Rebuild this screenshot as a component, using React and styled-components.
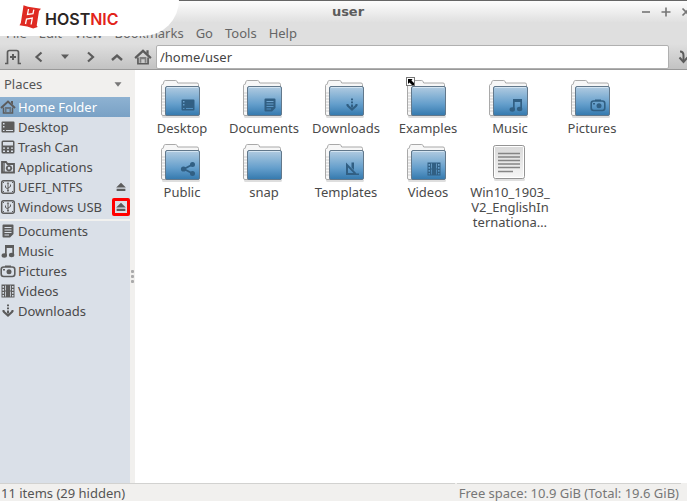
import React from "react";
import styled, { createGlobalStyle } from "styled-components";

const menus = ["File", "Edit", "View", "Bookmarks", "Go", "Tools", "Help"];

const places = [
  { name: "Home Folder", icon: "home", active: true },
  { name: "Desktop", icon: "desktop" },
  { name: "Trash Can", icon: "trash" },
  { name: "Applications", icon: "apps" },
  { name: "UEFI_NTFS", icon: "usb", eject: true },
  { name: "Windows USB", icon: "usb", eject: true, marked: true },
];

const bookmarks = [
  { name: "Documents", icon: "document" },
  { name: "Music", icon: "music" },
  { name: "Pictures", icon: "camera" },
  { name: "Videos", icon: "film" },
  { name: "Downloads", icon: "download" },
];

const files = [
  { lines: ["Desktop"], emblem: "desktop" },
  { lines: ["Documents"], emblem: "document" },
  { lines: ["Downloads"], emblem: "download" },
  { lines: ["Examples"], link: true },
  { lines: ["Music"], emblem: "music" },
  { lines: ["Pictures"], emblem: "camera" },
  { lines: ["Public"], emblem: "share" },
  { lines: ["snap"] },
  { lines: ["Templates"], emblem: "ruler" },
  { lines: ["Videos"], emblem: "film" },
  { lines: ["Win10_1903_", "V2_EnglishIn", "ternationa…"], text: true },
];

// all glyphs are drawn on a 16x16 grid
const glyphs = {
  home: (
    <>
      <path d="M1 9 8 2.5 15 9" fill="none" stroke="currentColor" strokeWidth="2" />
      <path d="M11 2h2v4l-2-2z" />
      <path d="M3.5 8.5V14h9V8.5" fill="none" stroke="currentColor" strokeWidth="1.5" />
      <path d="M5 8h6v5H9.5v-3h-3v3H5z" opacity="0.7" />
    </>
  ),
  desktop: (
    <path
      fillRule="evenodd"
      d="M2.5 2.5h11q1 0 1 1v9q0 1-1 1h-11q-1 0-1-1v-9q0-1 1-1zM3 4v1.5h1.5V4zM3 7v1.5h1.5V7zM3 11v1h1.5v-1zM6 11v1h7v-1z"
    />
  ),
  trash: (
    <path
      fillRule="evenodd"
      d="M3 1.5h10q1.5 0 1.5 1.5v10q0 1.5-1.5 1.5H3Q1.5 14.5 1.5 13V3Q1.5 1.5 3 1.5zM3 3v3.5h10V3zM3 8.5v1.2h2V8.5zM7 8.5v1.2h2V8.5zM11 8.5v1.2h2V8.5zM3 11.5v1.5h2v-1.5zM7 11.5v1.5h2v-1.5zM11 11.5v1.5h2v-1.5z"
    />
  ),
  apps: (
    <>
      <path d="M2 13.500V3h4l1.500 2H14v8.500z" fill="none" stroke="currentColor" strokeWidth="1.8" />
      <path d="M2 3h3v10H2z" opacity="0.7" />
      <circle cx="9" cy="9.200" r="2.200" fill="none" stroke="currentColor" strokeWidth="1.7" />
      <path d="M8.500 6h1v1.500h-1zM8.500 11h1v1.500h-1zM5.800 8.700h1.500v1H5.800zM10.800 8.700h1.500v1h-1.500z" />
    </>
  ),
  usb: (
    <>
      <rect x="1.7" y="1.7" width="12.600" height="12.600" rx="2" fill="none" stroke="currentColor" strokeWidth="1.5" />
      <path d="M8 4.500V12M5.500 6.500v2L8 10M10.500 5.500v2L8 9" fill="none" stroke="currentColor" />
      <path d="M3 3h1v1H3zM12 3h1v1h-1zM3 12h1v1H3zM12 12h1v1h-1zM7.200 11h1.600v1.600H7.200zM6.700 4.800 8 3l1.300 1.800z" />
    </>
  ),
  document: (
    <path
      fillRule="evenodd"
      d="M3.5 1.5h9q1 0 1 1V11L10 14.5H3.5q-1 0-1-1v-11q0-1 1-1zM4.5 4v1h7V4zM4.5 6.5v1h7v-1zM4.5 9v1h7V9zM4.5 11.5v1H9v-1z"
    />
  ),
  music: (
    <>
      <path d="M5 2h9v10h-1.700V5H6.700v7.500H5z" />
      <ellipse cx="4.300" cy="12.500" rx="2.700" ry="2.200" />
      <ellipse cx="11.600" cy="12" rx="2.700" ry="2.200" />
    </>
  ),
  camera: (
    <>
      <rect x="1.200" y="4" width="13.600" height="9.500" rx="2.500" fill="none" stroke="currentColor" strokeWidth="1.6" />
      <path d="M5 2.500h6V4H5zM3 6h2v1.500H3z" />
      <circle cx="9" cy="8.700" r="2.500" />
    </>
  ),
  film: (
    <path
      fillRule="evenodd"
      d="M1.5 1.5h13v13h-13zM2.5 3v1.7H4V3zM2.5 6v1.7H4V6zM2.5 9v1.7H4V9zM2.5 12v1.5H4V12zM12 3v1.7h1.5V3zM12 6v1.7h1.5V6zM12 9v1.7h1.5V9zM12 12v1.5h1.5V12zM5.2 2.5v5H6v-5zM5.2 8.5v5H6v-5zM10 2.5v5h.8v-5zM10 8.5v5h.8v-5z"
    />
  ),
  download: (
    <>
      <path d="M7 1.500h2v1.700H7zM7 4.500h2v1.800H7zM7 7.500h2v3H7zM2.500 7h2v2h-2zM11.500 7h2v2h-2z" />
      <path d="M3.500 8.500 8 12.500l4.500-4" fill="none" stroke="currentColor" strokeWidth="2.2" />
    </>
  ),
  share: (
    <>
      <path d="M12.500 3.500 4 8l8.500 4.500" fill="none" stroke="currentColor" strokeWidth="1.8" />
      <circle cx="12.500" cy="3.500" r="2.500" />
      <circle cx="3.500" cy="8" r="2.600" />
      <circle cx="12.500" cy="12.500" r="2.500" />
    </>
  ),
  ruler: (
    <>
      <path d="M2 1.500 14 14H2zM4 6.500V12h5.500z" fillRule="evenodd" />
      <path d="M7.500 1.500H10V9L7.500 6.500zM13 12.500h2V14h-2z" />
    </>
  ),
  newTab: (
    <>
      <path d="M0 14.500h2.500v-11q0-2 2-2h7q2 0 2 2v11H16" fill="none" stroke="currentColor" strokeWidth="1.7" />
      <path d="M7 5h2v2h2v2H9v2H7V9H5V7h2z" />
    </>
  ),
  back: <path d="m10.500 3.500-5 4.500 5 4.500" fill="none" stroke="currentColor" strokeWidth="2.2" />,
  forward: <path d="m5 3.500 5 4.500-5 4.500" fill="none" stroke="currentColor" strokeWidth="2.2" />,
  up: <path d="m3 11 5-4.500L13 11" fill="none" stroke="currentColor" strokeWidth="2.4" />,
  history: <path d="M4 5.500h8L8 10z" />,
  caret: <path d="M4 6h8l-4 5z" />,
  go: (
    <>
      <path d="M4 2.500q3.500 0 3.500 4v5.500" fill="none" stroke="currentColor" strokeWidth="2" />
      <path d="M3.500 8.500 7.500 13l4-4.500" fill="none" stroke="currentColor" strokeWidth="2" />
    </>
  ),
  eject: <path d="M8 3l5.500 5.500h-11zM3 10h10v2.500H3z" />,
  minimize: <path d="M4 7.200h8v1.600H4z" />,
  maximize: <path d="M7.200 3.500h1.600v3.700h3.700v1.600H8.800v3.700H7.200V8.800H3.500V7.200h3.700z" />,
  close: <path d="m4.500 4.500 7 7m0-7-7 7" stroke="currentColor" strokeWidth="1.7" />,
};

const Glyph = ({ name, size = 16 }) => (
  <svg width={size} height={size} viewBox="0 0 16 16" fill="currentColor" aria-hidden="true">
    {glyphs[name]}
  </svg>
);

const FolderIcon = ({ emblem, link }) => (
  <svg width="44" height="42" viewBox="0 0 44 42" overflow="visible" aria-hidden="true">
    <rect x="2" y="36" width="38" height="3" rx="1.5" fill="#000" opacity="0.13" />
    <path
      d="M1.5 35V6.5q0-1 1-1H3l1-3q.3-1 1.3-1h10.4q1 0 1.3 1l.7 1.500H37q1.500 0 1.500 1.500V35q0 1.500-1.500 1.500H3q-1.500 0-1.500-1.500z"
      fill="#f7f7f7"
      stroke="#a9a9a9"
    />
    <path d="M2 14h3.500M2 17h3.500M2 20h3.500M2 23h3.500M2 26h3.500M2 29h3.500M2 32h3.500" stroke="#cfcfcf" />
    <rect x="5.5" y="7.5" width="34" height="29" rx="1.5" fill="url(#folder)" stroke="#62788b" />
    <path d="M7 8.500h31" stroke="#d3e4f1" />
    {emblem && (
      <g transform="translate(20 18)" color="#315f83" fill="currentColor">
        {glyphs[emblem]}
      </g>
    )}
    {link && (
      <g>
        <rect x="0.5" y="-1.5" width="8" height="8" fill="#fff" stroke="#777" />
        <path d="M2 0h4.500L5.500 1.500 8 4v2H6L3.500 3.500 2 5z" fill="#000" />
      </g>
    )}
  </svg>
);

const TextIcon = () => (
  <svg width="44" height="42" viewBox="0 0 44 42" aria-hidden="true">
    <rect x="6" y="35" width="31" height="3" rx="1.5" fill="#000" opacity="0.12" />
    <rect x="5.5" y="2.5" width="31" height="33" rx="2" fill="url(#paper)" stroke="#949494" />
    <rect x="6.5" y="3.5" width="29" height="31" rx="1" fill="none" stroke="#fff" />
    <path
      d="M10 10.500h22M10 14h22M10 17.500h22M10 21h22M10 24.500h22M10 28.500h15"
      stroke="#858585"
      strokeWidth="1.5"
    />
  </svg>
);

const Gradients = () => (
  <HiddenSvg aria-hidden="true">
    <defs>
      <linearGradient id="folder" x1="0" y1="0" x2="0" y2="1">
        <stop offset="0" stopColor="#b2cce1" />
        <stop offset="0.6" stopColor="#659fcc" />
        <stop offset="1" stopColor="#3479ae" />
      </linearGradient>
      <linearGradient id="paper" x1="0" y1="0" x2="0" y2="1">
        <stop offset="0" stopColor="#d9d9d9" />
        <stop offset="1" stopColor="#f6f6f6" />
      </linearGradient>
    </defs>
  </HiddenSvg>
);

const PlaceItem = ({ place }) => (
  <Row $active={place.active}>
    <PlaceLink href="#" $active={place.active}>
      <PlaceIcon>
        <Glyph name={place.icon} />
      </PlaceIcon>
      {place.name}
    </PlaceLink>
    {place.eject && (
      <EjectButton $marked={place.marked} aria-label={`Eject ${place.name}`}>
        <Glyph name="eject" size={14} />
      </EjectButton>
    )}
  </Row>
);

const App = () => {
  return (
    <Window>
      <GlobalStyle />
      <Gradients />
      <TitleBar>
        <Title>user</Title>
        <Controls>
          <ControlButton aria-label="Minimize">
            <Glyph name="minimize" />
          </ControlButton>
          <ControlButton aria-label="Maximize">
            <Glyph name="maximize" />
          </ControlButton>
          <ControlButton aria-label="Close">
            <Glyph name="close" />
          </ControlButton>
        </Controls>
      </TitleBar>
      <MenuBar>
        {menus.map((menu) => (
          <MenuButton key={menu}>{menu}</MenuButton>
        ))}
      </MenuBar>
      <Toolbar>
        <ToolButton aria-label="New tab">
          <Glyph name="newTab" />
        </ToolButton>
        <ToolButton aria-label="Back">
          <Glyph name="back" />
        </ToolButton>
        <ToolButton aria-label="History">
          <Glyph name="history" />
        </ToolButton>
        <ToolButton aria-label="Forward">
          <Glyph name="forward" />
        </ToolButton>
        <ToolButton aria-label="Up">
          <Glyph name="up" />
        </ToolButton>
        <ToolButton aria-label="Home">
          <Glyph name="home" size={18} />
        </ToolButton>
        <PathInput aria-label="Location" defaultValue="/home/user" />
        <GoButton aria-label="Go">
          <Glyph name="go" />
        </GoButton>
      </Toolbar>
      <Body>
        <Sidebar>
          <PaneHeader>
            <PaneSelect aria-label="Side pane">
              <option>Places</option>
              <option>Directory Tree</option>
            </PaneSelect>
            <Glyph name="caret" size={14} />
          </PaneHeader>
          <PlacesPane>
            <List>
              {places.map((place) => (
                <PlaceItem key={place.name} place={place} />
              ))}
            </List>
            <Separator />
            <List>
              {bookmarks.map((place) => (
                <PlaceItem key={place.name} place={place} />
              ))}
            </List>
          </PlacesPane>
        </Sidebar>
        <Splitter>
          <Dot />
          <Dot />
          <Dot />
        </Splitter>
        <FileGrid>
          {files.map((file) => (
            <FileItem key={file.lines[0]}>
              {file.text ? <TextIcon /> : <FolderIcon emblem={file.emblem} link={file.link} />}
              <FileName>
                {file.lines.map((line, i) => (
                  <React.Fragment key={line}>
                    {i > 0 && <br />}
                    {line}
                  </React.Fragment>
                ))}
              </FileName>
            </FileItem>
          ))}
        </FileGrid>
      </Body>
      <StatusBar>
        <StatusLeft>11 items (29 hidden)</StatusLeft>
        <StatusRight>Free space: 10.9 GiB (Total: 19.6 GiB)</StatusRight>
      </StatusBar>
      <Brand>
        <svg width="22" height="24" viewBox="0 0 22 24" aria-hidden="true">
          <path d="M4.500 0.300 9 1.800l13 2-2 2.200-2.300 14.500 1 1.500-4.500 1.500-6-2-7.700-1.300L1.800 18 4 4z" fill="#df2a22" />
          <path
            d="M9.500 4 8.500 9.500l5.500-.8.800-4M6.500 19l1-5 5.800-1-1.200 6.500"
            stroke="#fff"
            strokeWidth="1.3"
            fill="none"
          />
        </svg>
        <BrandName>
          HOST<BrandAccent>NIC</BrandAccent>
        </BrandName>
      </Brand>
    </Window>
  );
};

const GlobalStyle = createGlobalStyle`
  * {
    box-sizing: border-box;
  }

  body {
    margin: 0;
    font-family: "Noto Sans", "Open Sans", sans-serif;
    font-size: 13px;
    color: #4a4a4a;
  }

  button, input, select {
    font: inherit;
    color: inherit;
    margin: 0;
    padding: 0;
    border: none;
    background: none;
  }

  svg {
    display: block;
    flex: none;
  }
`;

const HiddenSvg = styled.svg`
  width: 0;
  height: 0;
`;

const Window = styled.div`
  position: relative;
  display: flex;
  flex-direction: column;
  min-height: 100vh;
  overflow: hidden;
  background-color: #f1f0ee;
`;

const TitleBar = styled.header`
  display: flex;
  align-items: center;
  height: 22px;
  padding-left: 60px;
  border-top: 1px solid #666;
  background: linear-gradient(#fdfdfd, #e0e0e0);
`;

const Title = styled.h1`
  flex: 1;
  margin: 0;
  text-align: center;
  font-family: "DejaVu Sans", sans-serif;
  font-size: 13px;
  line-height: 20px;
  color: #5c5c5c;
`;

const Controls = styled.div`
  display: flex;
  width: 51px;
  overflow: hidden;
  color: #757575;
`;

const ControlButton = styled.button`
  display: flex;
  flex: none;
  justify-content: center;
  width: 20px;
`;

const MenuBar = styled.nav`
  display: flex;
  gap: 12px;
  height: 22px;
  padding-left: 6px;
  background-color: #dfdfdf;
`;

const MenuButton = styled.button`
  line-height: 22px;
  color: #666;
`;

const Toolbar = styled.div`
  display: flex;
  align-items: center;
  height: 26px;
  border-bottom: 1px solid #999;
  background: linear-gradient(#dfdfdf, #c2c2c2);
  color: #5c5c5c;
`;

const ToolButton = styled.button`
  display: flex;
  flex: none;
  align-items: center;
  justify-content: center;
  width: 26px;
  height: 24px;
`;

const PathInput = styled.input`
  flex: 1;
  min-width: 0;
  height: 24px;
  padding: 0 3px;
  border: 1px solid #b0b0b0;
  border-radius: 2px;
  background-color: white;
  color: #444;
  outline: none;
`;

const GoButton = styled.button`
  display: flex;
  flex: none;
  width: 18px;
  padding-left: 7px;
  overflow: hidden;
`;

const Body = styled.main`
  display: flex;
  flex: 1;
`;

const Sidebar = styled.aside`
  display: flex;
  flex: none;
  flex-direction: column;
  width: 130px;
`;

const PaneHeader = styled.div`
  display: flex;
  align-items: center;
  height: 27px;
  padding: 0 5px 0 4px;
  color: #777;
`;

const PaneSelect = styled.select`
  flex: 1;
  appearance: none;
  outline: none;
  color: #555;
`;

const PlacesPane = styled.div`
  flex: 1;
  background-color: #dae0e8;
`;

const List = styled.ul`
  margin: 0;
  padding: 0;
  list-style: none;
`;

const Row = styled.li`
  display: flex;
  align-items: center;
  height: 20px;
  background: ${(props) => (props.$active ? "linear-gradient(#8eb2d2, #79a1c5)" : "none")};
`;

const PlaceLink = styled.a`
  display: flex;
  flex: 1;
  align-items: center;
  gap: 2px;
  line-height: 20px;
  white-space: nowrap;
  text-decoration: none;
  color: ${(props) => (props.$active ? "#fff" : "#4a4a4a")};
`;

const PlaceIcon = styled.span`
  color: #5c5c5c;
`;

const EjectButton = styled.button`
  display: flex;
  flex: none;
  align-items: center;
  justify-content: center;
  width: 18px;
  height: 18px;
  border: ${(props) => (props.$marked ? "3px solid #f00" : "3px solid transparent")};
  border-radius: 2px;
  color: #5c5c5c;
`;

const Separator = styled.hr`
  height: 2px;
  margin: 2px 0 0;
  border: none;
  background-color: #f1f1ef;
`;

const Splitter = styled.div`
  display: flex;
  flex: none;
  flex-direction: column;
  align-items: center;
  justify-content: center;
  gap: 2px;
  width: 5px;
`;

const Dot = styled.span`
  width: 3px;
  height: 3px;
  border-radius: 1px;
  background-color: #aaa;
`;

const FileGrid = styled.section`
  display: grid;
  flex: 1;
  grid-template-columns: repeat(auto-fill, 82px);
  grid-auto-rows: minmax(64px, auto);
  align-content: start;
  padding: 9px 0 0 6px;
  background-color: white;
`;

const FileItem = styled.div`
  display: flex;
  flex-direction: column;
  align-items: center;
`;

const FileName = styled.span`
  line-height: 15px;
  text-align: center;
  white-space: nowrap;
`;

const StatusBar = styled.footer`
  display: flex;
  gap: 2px;
  height: 18px;
  padding-right: 6px;
  line-height: 18px;
  color: #555;
`;

const StatusLeft = styled.span`
  flex: 1;
  padding-left: 1px;
  border-top: 1px solid #d2d2d0;
`;

const StatusRight = styled.span`
  padding: 0 2px;
  border-top: 1px solid #d2d2d0;
  color: #777;
`;

const Brand = styled.div`
  position: absolute;
  top: 0;
  left: 0;
  display: flex;
  gap: 4px;
  width: 179px;
  height: 36px;
  padding: 5px 0 0 19px;
  border-bottom-right-radius: 36px 36px;
  background-color: white;
`;

const BrandName = styled.span`
  font-family: Inter, sans-serif;
  font-size: 16px;
  font-weight: 600;
  line-height: 28px;
  color: #2b2523;
`;

const BrandAccent = styled.span`
  color: #e2231a;
`;

export default App;
